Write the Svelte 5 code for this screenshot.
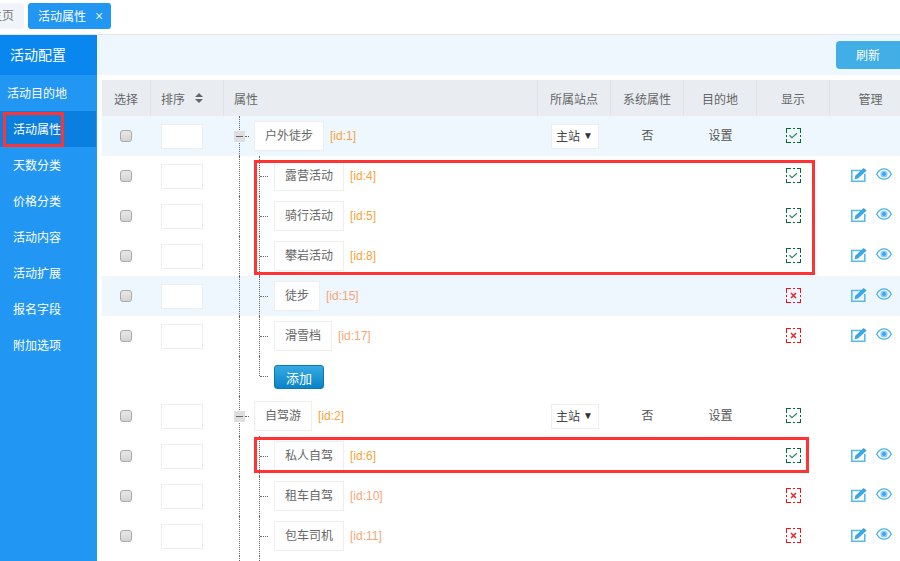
<script>
  const menu = ['活动目的地', '活动属性', '天数分类', '价格分类', '活动内容', '活动扩展', '报名字段', '附加选项'];

  const rows = [
    { type: 'parent', name: '户外徒步', id: 1, hot: true },
    { type: 'child', name: '露营活动', id: 4, on: true },
    { type: 'child', name: '骑行活动', id: 5, on: true },
    { type: 'child', name: '攀岩活动', id: 8, on: true },
    { type: 'child', name: '徒步', id: 15, hot: true },
    { type: 'child', name: '滑雪档', id: 17 },
    { type: 'add' },
    { type: 'parent', name: '自驾游', id: 2 },
    { type: 'child', name: '私人自驾', id: 6, on: true },
    { type: 'child', name: '租车自驾', id: 10 },
    { type: 'child', name: '包车司机', id: 11 }
  ];
</script>

<div class="page">
  <div class="tabs">
    <div class="tab home">主页</div>
    <div class="tab current">活动属性<span class="close">×</span></div>
  </div>

  <div class="body">
    <nav class="side">
      <div class="side-title">活动配置</div>
      {#each menu as item, i}
        <div class="side-item" class:first={i === 0} class:active={i === 1}>{item}</div>
      {/each}
    </nav>

    <main class="main">
      <div class="toolbar">
        <button class="refresh">刷新</button>
      </div>

      <div class="table">
        <div class="row head">
          <div class="cell">选择</div>
          <div class="cell left">
            排序
            <svg class="sort" viewBox="0 0 8 10" width="8" height="10"><path d="M4 0 8 4H0ZM4 10 0 6H8Z" fill="#666" /></svg>
          </div>
          <div class="cell left">属性</div>
          <div class="cell">所属站点</div>
          <div class="cell">系统属性</div>
          <div class="cell">目的地</div>
          <div class="cell">显示</div>
          <div class="cell">管理</div>
        </div>

        {#each rows as row}
          <div class="row" class:hot={row.hot}>
            <div class="cell">
              {#if row.type !== 'add'}<span class="check"></span>{/if}
            </div>
            <div class="cell">
              {#if row.type !== 'add'}<input class="order" />{/if}
            </div>
            <div class="cell tree">
              <span class="trunk"></span>
              {#if row.type === 'parent'}
                <span class="toggle"></span>
                <span class="dots short"></span>
                <span class="label">{row.name}</span>
                <span class="rid">[id:{row.id}]</span>
              {:else if row.type === 'child'}
                <span class="trunk sub"></span>
                <span class="dots"></span>
                <span class="label">{row.name}</span>
                <span class="rid" class:soft={!row.on}>[id:{row.id}]</span>
              {:else}
                <span class="trunk sub end"></span>
                <span class="dots"></span>
                <button class="add">添加</button>
              {/if}
            </div>
            <div class="cell site-cell">
              {#if row.type === 'parent'}
                <span class="site">主站<i>▼</i></span>
              {/if}
            </div>
            <div class="cell dark">{row.type === 'parent' ? '否' : ''}</div>
            <div class="cell dark">{row.type === 'parent' ? '设置' : ''}</div>
            <div class="cell flag-cell">
              {#if row.type === 'parent' || row.on}
                <svg class="flag" viewBox="0 0 15 15" width="15" height="15">
                  <rect class="edge" x=".5" y=".5" width="14" height="14" stroke="#006b35" />
                  <path d="M3.500 7.300 6 9.700 11 5.300" fill="none" stroke="#2f8a5a" stroke-width="1.200" />
                </svg>
              {:else if row.type === 'child'}
                <svg class="flag" viewBox="0 0 15 15" width="15" height="15">
                  <rect class="edge" x=".5" y=".5" width="14" height="14" stroke="#f50f18" />
                  <path d="M5 5 10 10M10 5 5 10" fill="none" stroke="#f0222a" stroke-width="1.500" />
                </svg>
              {/if}
            </div>
            <div class="cell manage">
              {#if row.type === 'child'}
                <svg class="ico" viewBox="0 0 16 15" width="16" height="15">
                  <path d="M10.500 3.500H.8V14.200H13.800V7" fill="none" stroke="#5cb9ec" stroke-width="1.600" />
                  <path d="M4.300 8.800 12.600 1 15.600 3.600 7 11.500 3.600 12.300Z" fill="#3aa6e6" />
                </svg>
                <svg class="ico" viewBox="0 0 16 12" width="16" height="12">
                  <path d="M.7 6C2.500 2.600 5 .8 8 .8s5.500 1.800 7.300 5.200C13.500 9.400 11 11.200 8 11.200S2.500 9.400.7 6Z" fill="none" stroke="#4db2e8" stroke-width="1.300" />
                  <circle cx="8" cy="6" r="3.600" fill="#8ccdf2" />
                  <circle cx="8" cy="6" r="1.900" fill="#3aa6e6" />
                </svg>
              {/if}
            </div>
          </div>
        {/each}

        <div class="row tail">
          <div class="cell"></div>
          <div class="cell"></div>
          <div class="cell tree"><span class="trunk"></span><span class="trunk sub"></span></div>
        </div>
      </div>
    </main>
  </div>

  <span class="mark mark-nav"></span>
  <span class="mark mark-group"></span>
  <span class="mark mark-single"></span>
</div>

<style>
  :global(body) {
    margin: 0;
  }

  .page {
    position: relative;
    width: 900px;
    height: 561px;
    overflow: hidden;
    background: #fff;
    color: #666;
    font-family: "Liberation Sans", "Noto Sans CJK SC", sans-serif;
    font-size: 12px;
  }

  .tabs {
    display: flex;
    gap: 4px;
    height: 31px;
    padding-top: 3px;
    border-bottom: 1px solid #e1e8f4;
  }

  .tab {
    height: 26px;
    line-height: 26px;
    border-radius: 3px;
    box-sizing: border-box;
  }

  .home {
    width: 44px;
    margin-left: -20px;
    padding-left: 10px;
    background: #f0f3fa;
    color: #777;
  }

  .current {
    width: 83px;
    padding-left: 10px;
    background: #2196f3;
    color: #fff;
  }

  .close {
    margin-left: 9px;
    font-size: 14px;
    color: #dcecfb;
  }

  .body {
    display: flex;
    height: 526px;
  }

  .side {
    width: 97px;
    flex: none;
    background: #2196f3;
    color: #fff;
  }

  .side-title {
    height: 40px;
    line-height: 40px;
    padding-left: 10px;
    background: #0a87ee;
    font-size: 14px;
  }

  .side-item {
    height: 36px;
    line-height: 38px;
    padding-left: 13px;
  }

  .side-item.first {
    padding-left: 7px;
  }

  .side-item.active {
    width: 96px;
    box-sizing: border-box;
    background: #0b7fe0;
  }

  .main {
    flex: 1;
    min-width: 0;
  }

  .toolbar {
    display: flex;
    justify-content: flex-end;
    align-items: center;
    height: 40px;
    background: #eef6fe;
  }

  .refresh {
    width: 64px;
    height: 28px;
    padding: 0 0 2px;
    border: 0;
    border-radius: 4px 0 0 4px;
    background: #41aee5;
    color: #fff;
    font: inherit;
  }

  .table {
    width: 808px;
    margin: 5px 0 0 5px;
  }

  .row {
    display: grid;
    grid-template-columns: 48px 73px 314px 73px 73px 73px 73px 82px;
    height: 40px;
  }

  .row.hot {
    background: #eef7fe;
  }

  .row.head {
    height: 36px;
    background: #e9edf2;
  }

  .row.tail {
    height: 5px;
  }

  .cell {
    display: flex;
    align-items: center;
    justify-content: center;
    min-width: 0;
  }

  .head .cell {
    box-sizing: border-box;
    border-left: 1px solid #dfe3e8;
  }

  .head .cell:first-child {
    border-left: 0;
  }

  .head .left {
    justify-content: flex-start;
    padding-left: 10px;
  }

  .dark {
    padding: 0 0 3px 2px;
    color: #555;
  }

  .sort {
    margin-left: 10px;
  }

  .check {
    width: 10px;
    height: 10px;
    margin-bottom: 1px;
    border: 1px solid #aaa;
    border-radius: 3px;
    background: linear-gradient(#e8e8e8, #d4d4d4);
  }

  .order {
    width: 42px;
    height: 25px;
    margin-right: 9px;
    padding: 0;
    box-sizing: border-box;
    border: 1px solid #eee;
    background: #fff;
    outline: 0;
  }

  .tree {
    justify-content: flex-start;
    padding-left: 16px;
  }

  .trunk {
    flex: none;
    align-self: stretch;
    width: 0;
    border-left: 1px dotted #666;
  }

  .trunk.sub {
    margin-left: 19px;
  }

  .trunk.sub.end {
    margin-bottom: 20px;
  }

  .toggle {
    position: relative;
    flex: none;
    width: 11px;
    height: 11px;
    margin-left: -6px;
    background: #dcdee2;
  }

  .toggle::after {
    content: '';
    position: absolute;
    left: 2px;
    top: 5px;
    width: 7px;
    height: 1px;
    background: #666;
  }

  .dots {
    flex: none;
    width: 8px;
    margin-right: 6px;
    border-top: 1px dotted #666;
  }

  .dots.short {
    width: 4px;
    margin-right: 5px;
  }

  .label {
    flex: none;
    height: 30px;
    line-height: 28px;
    padding: 0 10px;
    box-sizing: border-box;
    border: 1px solid #eee;
    background: #fff;
  }

  .rid {
    margin-left: 6px;
    color: #f8a33b;
  }

  .rid.soft {
    color: #f7a677;
  }

  .add {
    width: 50px;
    height: 24px;
    margin-top: 2px;
    padding: 0;
    border: 1px solid #0d78b5;
    border-radius: 3px;
    background: linear-gradient(#35a9e2, #0a84c8);
    color: #fff;
    font: inherit;
    font-size: 13px;
  }

  .site-cell {
    padding-left: 3px;
  }

  .site {
    display: flex;
    align-items: center;
    justify-content: space-between;
    width: 48px;
    height: 25px;
    padding: 0 5px 1px 4px;
    box-sizing: border-box;
    border: 1px solid #eee;
    background: #fff;
    color: #444;
  }

  .site i {
    font-style: normal;
    font-size: 10px;
    color: #333;
  }

  .flag-cell {
    padding-left: 2px;
  }

  .flag {
    flex: none;
    margin-bottom: 1px;
  }

  .edge {
    fill: none;
    stroke-dasharray: 8 2 2 2;
    stroke-dashoffset: 4;
    shape-rendering: crispEdges;
  }

  .manage {
    justify-content: flex-start;
    align-items: flex-start;
    gap: 9px;
    padding: 11px 0 0 22px;
  }

  .ico {
    flex: none;
  }

  .ico + .ico {
    margin-top: 1px;
  }

  .mark {
    position: absolute;
    box-sizing: border-box;
    border: 3px solid #ff3333;
  }

  .mark-nav {
    left: 3px;
    top: 112px;
    width: 61px;
    height: 35px;
  }

  .mark-group {
    left: 254px;
    top: 160px;
    width: 561px;
    height: 115px;
  }

  .mark-single {
    left: 254px;
    top: 437px;
    width: 555px;
    height: 36px;
  }
</style>
